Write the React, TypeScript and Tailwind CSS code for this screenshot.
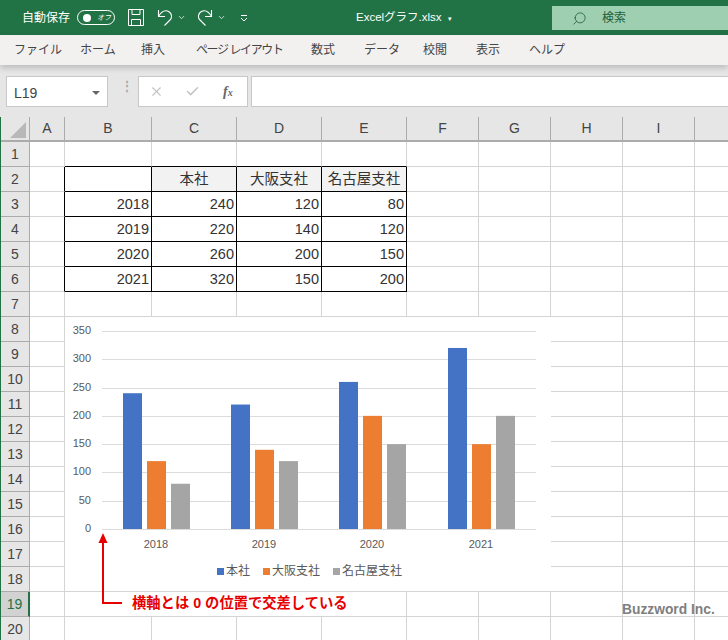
import { ChevronDown, Search, X, Check } from "lucide-react";

const FONT = "[font-family:'Liberation_Sans','Noto_Sans_CJK_JP',sans-serif]";
const tabs = [
  { label: "ファイル", w: "w-[66px]", extra: "" },
  { label: "ホーム", w: "w-[61px]", extra: "" },
  { label: "挿入", w: "w-[55px]", extra: "" },
  { label: "ページ レイアウト", w: "w-[115px]", extra: "tracking-[-1.4px]" },
  { label: "数式", w: "w-[53px]", extra: "" },
  { label: "データ", w: "w-[59px]", extra: "" },
  { label: "校閲", w: "w-[53px]", extra: "" },
  { label: "表示", w: "w-[53px]", extra: "" },
  { label: "ヘルプ", w: "w-[50px]", extra: "" },
];
const columns = [
  { name: "A", w: 35 },
  { name: "B", w: 87 },
  { name: "C", w: 85 },
  { name: "D", w: 85 },
  { name: "E", w: 85 },
  { name: "F", w: 72 },
  { name: "G", w: 72 },
  { name: "H", w: 72 },
  { name: "I", w: 72 },
  { name: "", w: 34 },
];
const table = [
  ["", "本社", "大阪支社", "名古屋支社"],
  ["2018", "240", "120", "80"],
  ["2019", "220", "140", "120"],
  ["2020", "260", "200", "150"],
  ["2021", "320", "150", "200"],
];
const rows = Array.from({ length: 20 }, (_, i) => i + 1);

function Cell({ row, col }: { row: number; col: number }) {
  const inTable = row >= 2 && row <= 6 && col >= 1 && col <= 4;
  if (!inTable) {
    // neighbours of the table carry its outer border
    const rightBlack = col === 0 && row >= 2 && row <= 6;
    const bottomBlack = row === 1 && col >= 1 && col <= 4;
    return (
      <div
        className={`bg-white border-r border-b ${rightBlack ? "border-r-black" : "border-r-[#d4d4d4]"} ${
          bottomBlack ? "border-b-black" : "border-b-[#d4d4d4]"
        }`}
      />
    );
  }
  const text = table[row - 2][col - 1];
  const header = row === 2;
  return (
    <div
      className={`flex items-center overflow-hidden border-r border-b border-black text-[14.5px] leading-none whitespace-nowrap text-[#333] ${
        header && col > 1 ? "justify-center bg-[#f2f2f2]" : "justify-end bg-white pr-[2px]"
      }`}
    >
      {text}
    </div>
  );
}

function Chart() {
  const y = (v: number) => 212 - (v * 198) / 350;
  const groups = [
    { label: "2018", x: 58, lx: 91, v: [240, 120, 80] },
    { label: "2019", x: 166, lx: 199, v: [220, 140, 120] },
    { label: "2020", x: 274, lx: 307, v: [260, 200, 150] },
    { label: "2021", x: 383, lx: 416, v: [320, 150, 200] },
  ];
  const colors = ["#4472c4", "#ed7d31", "#a5a5a5"];
  return (
    <svg width="486" height="274" viewBox="0 0 486 274" className="absolute top-[317px] left-[65px] bg-white">
      {[0, 50, 100, 150, 200, 250, 300, 350].map((v) => (
        <g key={v}>
          <line x1="37" x2="471" y1={Math.round(y(v)) + 0.5} y2={Math.round(y(v)) + 0.5} stroke="#dcdcdc" />
          <text x="26" y={y(v) + 3} textAnchor="end" fontSize="11" fill="#595959">
            {v}
          </text>
        </g>
      ))}
      {groups.map((g) => (
        <g key={g.label}>
          {g.v.map((v, i) => (
            <rect key={i} x={g.x + i * 24} y={y(v)} width="19" height={212 - y(v)} fill={colors[i]} />
          ))}
          <text x={g.lx} y="231" textAnchor="middle" fontSize="11" fill="#595959">
            {g.label}
          </text>
        </g>
      ))}
      <rect x="152" y="251" width="7" height="7" fill={colors[0]} />
      <text x="161" y="258" fontSize="12" fill="#595959">本社</text>
      <rect x="198" y="251" width="7" height="7" fill={colors[1]} />
      <text x="207" y="258" fontSize="12" fill="#595959">大阪支社</text>
      <rect x="268" y="251" width="7" height="7" fill={colors[2]} />
      <text x="277" y="258" fontSize="12" fill="#595959">名古屋支社</text>
    </svg>
  );
}

function UndoIcon({ className = "" }: { className?: string }) {
  return (
    <svg width="16" height="17" viewBox="0 0 16 17" fill="none" stroke="white" strokeWidth="1.1" className={className}>
      <path d="M1.5 1v6.5H8" />
      <path d="M1.5 7.5C4 3 7.5 1 10.5 2c4.500 1.500 5 6.500 2.500 9L7.500 16.500" />
    </svg>
  );
}

export default function App() {
  return (
    <div className={`relative flex h-[640px] w-[728px] flex-col overflow-hidden bg-[#e6e6e6] ${FONT}`}>
      {/* title bar */}
      <div className="flex h-[35px] shrink-0 items-center bg-[#217346] text-white">
        <span className="ml-[22px] w-[55px] text-[12px] whitespace-nowrap">自動保存</span>
        <div className="relative flex h-[15px] w-[38px] items-center rounded-full border border-white">
          <span className="ml-[5px] h-[8px] w-[8px] rounded-full bg-white" />
          <span className="ml-[6px] text-[7px] leading-none italic">オフ</span>
        </div>
        <svg width="16" height="17" viewBox="0 0 16 17" fill="none" stroke="white" className="ml-[13px]">
          <path d="M.5.5h15v16H.5z M4 .5v5h8v-5 M3.500 16.500v-6h9v6" />
        </svg>
        <UndoIcon className="ml-[13px]" />
        <ChevronDown size={9} className="ml-[4px]" />
        <UndoIcon className="ml-[11px] -scale-x-100" />
        <ChevronDown size={9} className="ml-[4px]" />
        <svg width="8" height="8" viewBox="0 0 8 8" fill="none" stroke="white" className="ml-[14px]">
          <path d="M1 1.500h6M1 4l3 3 3-3" />
        </svg>
        <span className="ml-[108px] w-[196px] text-[11.5px] whitespace-nowrap">
          Excelグラフ.xlsx <span className="ml-[3px] text-[7px]">▾</span>
        </span>
        <div className="mt-[6px] flex h-[24px] flex-1 items-center self-start bg-[#9fcfb1] text-[#1f5f3a]">
          <Search size={15} strokeWidth={1.3} className="ml-[20px] -scale-x-100" />
          <span className="ml-[15px] text-[12px]">検索</span>
        </div>
      </div>
      {/* ribbon tabs */}
      <div className="z-10 flex h-[30px] shrink-0 items-center bg-[#f3f1f0] pl-[14px] shadow-[0_3px_6px_rgba(0,0,0,0.18)]">
        {tabs.map((t) => (
          <span key={t.label} className={`${t.w} ${t.extra} shrink-0 text-[12px] whitespace-nowrap text-[#444]`}>
            {t.label}
          </span>
        ))}
      </div>
      {/* formula bar */}
      <div className="flex h-[52px] shrink-0 items-start bg-[#e6e6e6] pt-[11px] pl-[6px]">
        <div className="flex h-[31px] w-[102px] items-center justify-between border border-[#c8c8c8] bg-white px-[7px] pt-[3px] text-[14px] text-[#444]">
          L19
          <span className="h-0 w-0 border-x-[4px] border-t-[4px] border-x-transparent border-t-[#666]" />
        </div>
        <span className="mt-[9px] ml-[13px] w-[3px] text-[12px] leading-[3.5px] font-bold text-[#aaa]">⋮</span>
        <div className="ml-[14px] flex h-[31px] w-[110px] items-center border border-[#c8c8c8] bg-white">
          <X size={15} strokeWidth={1.8} className="ml-[10px] text-[#c4c4c4]" />
          <Check size={15} strokeWidth={2.4} className="ml-[21px] text-[#c4c4c4]" />
          <span className="ml-[23px] text-[14px] font-bold text-[#666] italic [font-family:'Liberation_Serif',serif]">
            f<span className="text-[10px]">x</span>
          </span>
        </div>
        <div className="ml-[3px] h-[31px] flex-1 border border-r-0 border-[#c8c8c8] bg-white" />
      </div>
      {/* sheet */}
      <div className="flex flex-1 flex-col border-l border-[#217346]">
        <div className="flex h-[25px] shrink-0 border-b-2 border-[#ababab] bg-[#e6e6e6]">
          <div className="flex w-[29px] shrink-0 items-end border-r border-[#ababab] pr-[3px] pb-[2px]">
            <span className="ml-auto h-0 w-0 border-b-[16px] border-l-[16px] border-b-[#b8b8b8] border-l-transparent" />
          </div>
          {columns.map((c, i) => (
            <div
              key={i}
              style={{ width: c.w }}
              className="flex shrink-0 items-center justify-center border-r border-[#ababab] text-[14px] text-[#444]"
            >
              {c.name}
            </div>
          ))}
        </div>
        {rows.map((r) => (
          <div key={r} className="flex h-[25px] shrink-0">
            <div
              className={`flex w-[29px] shrink-0 items-center justify-center border-r border-b text-[14px] ${
                r === 19
                  ? "border-r-2 border-r-[#217346] border-b-[#ababab] bg-[#d2d2d2] text-[#217346]"
                  : "border-[#ababab] bg-[#e6e6e6] text-[#444]"
              }`}
            >
              {r}
            </div>
            {columns.map((c, i) => (
              <div key={i} style={{ width: c.w }} className="grid shrink-0">
                <Cell row={r} col={i} />
              </div>
            ))}
          </div>
        ))}
      </div>
      <Chart />
      {/* annotation */}
      <span className="absolute top-[592px] left-[105px] h-[24px] w-[246px] bg-white pl-[27px] text-[14.3px] leading-[22px] font-bold whitespace-nowrap text-[#e60000]">
        横軸とは 0 の位置で交差している
      </span>
      <svg width="30" height="75" viewBox="0 0 30 75" fill="none" className="absolute top-[532px] left-[95px]">
        <path d="M8 8v63h19" stroke="#e60000" strokeWidth="2" />
        <path d="M3.500 11L8 1l4.500 10z" fill="#e60000" />
      </svg>
      <span className="absolute top-[600px] left-[622px] text-[13.800px] leading-[20px] font-bold whitespace-nowrap text-[#7f7f7f]">
        Buzzword Inc.
      </span>
    </div>
  );
}
